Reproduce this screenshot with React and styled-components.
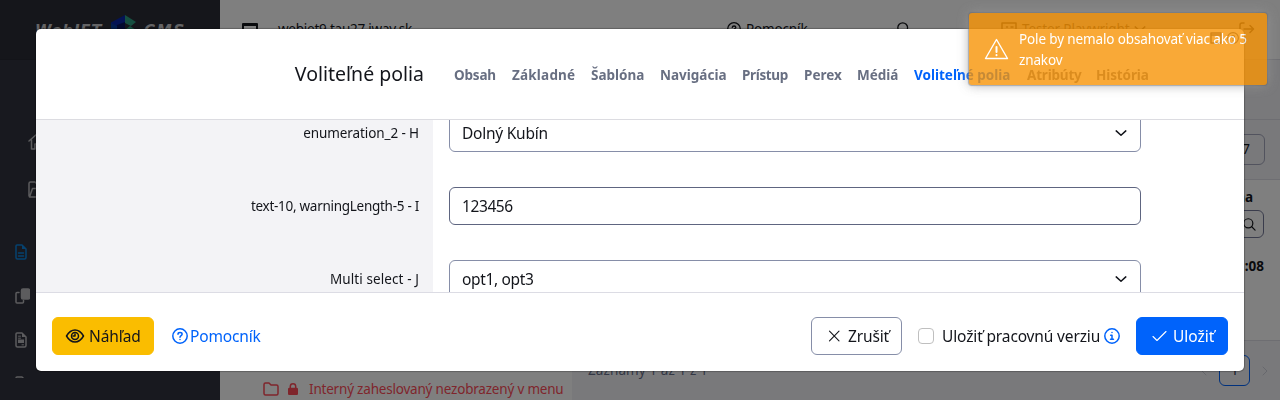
import React from 'react';
import styled, { createGlobalStyle, css } from 'styled-components';

const Global = createGlobalStyle`
  *, *::before, *::after { box-sizing: border-box; }
  body { margin: 0; width: 1280px; height: 400px; overflow: hidden; background: #fff; color: #13151b;
    font: 13.5px/21px "Noto Sans", "Open Sans", sans-serif; font-variant-ligatures: none; }
  button, input { font: inherit; color: inherit; margin: 0; }
`;

const Text = styled.span`
  white-space: nowrap;
  letter-spacing: ${p => p.$ls || 0}px;
`;

const Glyph = styled.svg`
  display: block;
  flex: none;
  width: ${p => p.$w || 16}px;
  height: ${p => p.$h || p.$w || 16}px;
  fill: none;
  stroke: currentColor;
  stroke-width: ${p => p.$stroke || 1.5};
  stroke-linecap: round;
  stroke-linejoin: round;
`;

/* ---------- page behind the dialog ---------- */

const Page = styled.div`
  display: flex;
  height: 400px;
`;

const Sidebar = styled.aside`
  width: 220px;
  flex: none;
  background: #31333e;
  color: #b8b8bc;
`;

const Brand = styled.div`
  height: 60px;
  display: flex;
  align-items: flex-start;
  padding: 14px 0 0 35px;
  background: #2b2d37;
  border-bottom: 1px solid #272932;
`;

const BrandWord = styled.span`
  width: ${p => p.$w}px;
  padding-top: 7px;
  white-space: nowrap;
  color: #c9c9cc;
  font: italic 700 15px/20px "DejaVu Sans", sans-serif;
  letter-spacing: ${p => p.$ls}px;
`;

const MainMenu = styled.div`
  display: grid;
  gap: 32px;
  padding: 73px 0 0 28px;
`;

const SubMenu = styled.div`
  display: grid;
  gap: 28px;
  padding: 47px 0 0 15px;
`;

const MenuIcon = styled.span`
  display: block;
  height: ${p => p.$h || 16}px;
  overflow: ${p => (p.$h ? 'hidden' : 'visible')};
  color: ${p => (p.$active ? '#0a84e0' : 'inherit')};
`;

const Main = styled.main`
  flex: 1;
  display: flex;
  flex-direction: column;
`;

const TopBar = styled.header`
  height: 60px;
  flex: none;
  display: flex;
  align-items: flex-start;
  padding: 17px 24px 0 22px;
  border-bottom: 1px solid #dcdce4;
`;

const TopItem = styled.span`
  width: ${p => p.$w}px;
  flex: none;
  display: flex;
  align-items: center;
  gap: ${p => p.$gap || 4}px;
  height: 24px;
`;

const Columns = styled.div`
  flex: 1;
  display: flex;
`;

const TreePane = styled.section`
  width: 352px;
  flex: none;
  display: flex;
  align-items: flex-end;
`;

const TreeRow = styled.div`
  display: flex;
  align-items: center;
  height: 22px;
  padding-left: 43px;
  color: #ff4b58;
  svg + svg { margin-left: 9px; }
  span { margin-left: 11px; }
`;

const TablePane = styled.section`
  flex: 1;
  display: flex;
  flex-direction: column;
  background: #f3f3f6;
`;

const Strip = styled.div`
  height: ${p => p.$h}px;
  flex: none;
  display: flex;
  flex-direction: column;
  align-items: flex-end;
  padding: ${p => p.$pad || '0'};
  background: ${p => (p.$white ? '#fff' : 'transparent')};
  border-bottom: 1px solid #dcdce4;
  font-weight: ${p => (p.$bold ? 700 : 400)};
`;

const ColumnName = styled(Text)`
  margin-right: 11px;
`;

const TimeValue = styled(Text)`
  margin-top: 18px;
`;

const SmallField = styled.div`
  width: 62px;
  height: ${p => p.$h}px;
  display: flex;
  align-items: center;
  justify-content: flex-end;
  margin-top: ${p => p.$mt || 0}px;
  padding-right: ${p => p.$pr}px;
  border: 1px solid ${p => p.$line};
  border-radius: 6px;
`;

const Pager = styled.div`
  display: flex;
  align-items: center;
  padding: 14px 12px 0 16px;
  color: #68708c;
`;

const PagerNav = styled.div`
  display: flex;
  align-items: center;
  gap: 12px;
  margin-left: auto;
  color: #cfd1da;
`;

const PageNumber = styled.span`
  width: 31px;
  height: 31px;
  display: grid;
  place-items: center;
  border: 1px solid #0063fb;
  border-radius: 6px;
  color: #30364f;
`;

/* ---------- dialog ---------- */

const Backdrop = styled.div`
  position: fixed;
  inset: 0;
  padding: 29px 36px;
  background: rgba(0, 0, 0, .5);
`;

const Dialog = styled.div`
  height: 342px;
  display: flex;
  flex-direction: column;
  overflow: hidden;
  border-radius: 5px;
  background: #fff;
  box-shadow: 0 0 1px 1px rgba(0, 0, 0, .25);
`;

const DialogHead = styled.div`
  height: 91px;
  flex: none;
  display: flex;
  align-items: flex-start;
  border-bottom: 1px solid #dcdce1;
`;

const Title = styled.h1`
  width: 388px;
  margin: 0;
  padding-top: 30px;
  text-align: right;
  font-size: 19.5px;
  line-height: 30px;
  font-weight: 400;
`;

const Tabs = styled.nav`
  display: flex;
  gap: 16px;
  margin: 36px 0 0 30px;
  font-weight: 700;
`;

const Tab = styled.span`
  width: ${p => p.$w}px;
  white-space: nowrap;
  letter-spacing: ${p => p.$ls || 0}px;
  color: ${p => (p.$active ? '#0063fb' : '#686f82')};
`;

const WindowTools = styled.span`
  display: flex;
  gap: 5px;
  margin: 3px 0 0 auto;
  padding-right: 5px;
  color: #4b4f5c;
`;

const DialogBody = styled.div`
  height: 172px;
  flex: none;
  display: flex;
  flex-direction: column;
  justify-content: center;
  overflow: hidden;
  background: linear-gradient(to right, #f3f3f6 397px, #fff 397px);
`;

const FieldRow = styled.div`
  height: 73px;
  flex: none;
  display: grid;
  grid-template-columns: 383px 692px;
  column-gap: 30px;
  align-items: center;
  text-align: right;
`;

const Control = styled.div`
  height: 38px;
  display: flex;
  align-items: center;
  justify-content: space-between;
  padding: 0 13px 0 12px;
  border: 1px solid ${p => (p.$input ? '#5e6580' : '#868ea8')};
  border-radius: 6px;
  background: #fff;
  font-size: 15.5px;
`;

const DialogFoot = styled.div`
  flex: 1;
  display: flex;
  align-items: flex-start;
  padding: 24px 16px 0;
  border-top: 1px solid #dcdce4;
  font-size: 15.5px;
`;

const buttonKinds = {
  preview: css`background: #fabd00; border-color: #fabd00; width: 102px;`,
  link: css`background: transparent; border-color: transparent; color: #0063fb; padding: 0; margin-left: 17px; gap: 2px;`,
  cancel: css`background: #fff; border-color: #868ea8; width: 91px; margin-left: auto;`,
  save: css`background: #0063fb; border-color: #0063fb; color: #fff; width: 92px;`,
};

const Button = styled.button`
  height: 38px;
  display: flex;
  align-items: center;
  gap: 4px;
  padding: 0 12px;
  border: 1px solid;
  border-radius: 6px;
  ${p => buttonKinds[p.$kind]}
`;

const CheckLabel = styled.label`
  width: 218px;
  height: 38px;
  display: flex;
  align-items: center;
  margin-left: 16px;
  padding-right: 16px;
  svg { margin-left: auto; color: #0063fb; }
`;

const Box = styled.span`
  width: 16px;
  height: 16px;
  flex: none;
  margin-right: 8px;
  border: 1px solid #bfbfbf;
  border-radius: 4px;
`;

const Toast = styled.div`
  position: fixed;
  top: 13px;
  left: 969px;
  width: 298px;
  height: 72px;
  display: flex;
  align-items: center;
  gap: 10px;
  padding: 0 15px;
  border-radius: 3px;
  background: #f89406;
  color: #fff;
  opacity: .8;
  box-shadow: 0 0 12px #999, 0 0 1px 1px rgba(70, 80, 100, .6);
`;

const ToastMessage = styled.div`
  padding-top: 2px;
  white-space: nowrap;
  letter-spacing: -.13px;
`;

/* ---------- drawings ---------- */

const HelpIcon = ({ size = 16 }) => (
  <Glyph $w={size} viewBox="0 0 16 16">
    <circle cx="8" cy="8" r="7.2" />
    <path d="M6 6.2C6 5 6.9 4.6 8.1 4.6c1.200 0 2 .7 2 1.600C10.100 7.500 8 7.600 8 9.200M8 11.400v.1" />
  </Glyph>
);

const SearchIcon = ({ size = 14 }) => (
  <Glyph $w={size} $stroke={1.3} viewBox="0 0 14 14"><circle cx="5.700" cy="5.700" r="4.900" /><path d="M9.200 9.200 13 13" /></Glyph>
);

const Chevron = () => (
  <Glyph $w={12} $stroke={1.5} viewBox="0 0 12 12"><path d="M1.200 3.900 6 8.300l4.800-4.400" /></Glyph>
);

const Cube = () => (
  <Glyph $w={26} $h={30} viewBox="0 0 26 30">
    <g stroke="none">
      <path fill="#0826a8" d="M14 1v10L0 17V8.500z" />
      <path fill="#2d9f82" d="m14 1 11 7-5 4-6-3z" />
      <path fill="#07145d" d="m6 11 8-3v12L1 24z" />
      <path fill="#2d9f82" d="m19 12 6 4-5 4-6-4z" />
      <path fill="#063c9f" d="M0 9v10l6 2v-9z" />
    </g>
  </Glyph>
);

const DocIcon = ({ shaded }) => (
  <Glyph $w={12} $h={16} viewBox="0 0 12 16">
    <path d="M2 1h5l4 4v8.500a1.500 1.500 0 0 1-1.500 1.500h-7A1.500 1.500 0 0 1 1 13.500V2a1 1 0 0 1 1-1Z" />
    <path d="M7 1v4h4z" fill="currentColor" stroke="none" />
    {shaded
      ? <><path d="M3.500 4.200h2M3.500 6.200h2M7 12.800h1.500" strokeWidth="1" /><rect x="3" y="7.500" width="6" height="3.500" fill="currentColor" stroke="none" /></>
      : <path d="M3.500 9h5M3.500 12h5" />}
  </Glyph>
);

const tabs = [
  ['Obsah', 42, -0.2], ['Základné', 63, 0.2], ['Šablóna', 53], ['Navigácia', 66], ['Prístup', 46, -0.35],
  ['Perex', 37], ['Médiá', 41], ['Voliteľné polia', 97], ['Atribúty', 53, -0.2], ['História', 53, -0.1],
];

const fields = [
  { label: 'enumeration_2 - H', labelSpacing: -0.1, value: 'Dolný Kubín', spacing: -0.25 },
  { label: 'text-10, warningLength-5 - I', labelSpacing: -0.28, value: '123456', spacing: -0.4, input: true },
  { label: 'Multi select - J', labelSpacing: 0.1, value: 'opt1, opt3', spacing: -0.35 },
];

export default function App() {
  return (
    <>
      <Global />
      <Page>
        <Sidebar>
          <Brand>
            <BrandWord $w={76} $ls={0.8}>WebJET</BrandWord>
            <Cube />
            <BrandWord $w={50} $ls={1.8}>&nbsp;CMS</BrandWord>
          </Brand>
          <MainMenu>
            <MenuIcon>
              <Glyph $w={18} $h={17} viewBox="0 0 18 17"><path d="M1 8 9 1l8 7M3.500 7v9H7v-5h4v5h3.500V7" /></Glyph>
            </MenuIcon>
            <MenuIcon>
              <Glyph $w={18} $h={17} viewBox="0 0 18 17"><path d="M1 15V2.500A1.500 1.500 0 0 1 2.500 1H7l2 2h6v4M1.500 16 4.500 7.500H17L14 16z" /></Glyph>
            </MenuIcon>
          </MainMenu>
          <SubMenu>
            <MenuIcon $active><DocIcon /></MenuIcon>
            <MenuIcon>
              <Glyph $w={15} $h={16} viewBox="0 0 15 16">
                <path d="M4 4.500H2A1 1 0 0 0 1 5.500V14a1 1 0 0 0 1 1h5.500a1 1 0 0 0 1-1v-1.500" />
                <rect x="6.500" y="1" width="8" height="10" rx="1.500" fill="currentColor" />
              </Glyph>
            </MenuIcon>
            <MenuIcon><DocIcon shaded /></MenuIcon>
            <MenuIcon $h={2}><DocIcon /></MenuIcon>
          </SubMenu>
        </Sidebar>
        <Main>
          <TopBar>
            <TopItem $w={485} $gap={20}>
              <Glyph $w={16} $h={14} viewBox="0 0 16 14" $stroke={2}><path d="M1 2h14v11H1zM1 3h14" /></Glyph>
              <Text $ls={-0.24}>webjet9.tau27.iway.sk</Text>
            </TopItem>
            <TopItem $w={170} $gap={5}><HelpIcon size={14} /><Text $ls={-0.15}>Pomocník</Text></TopItem>
            <TopItem $w={104}><SearchIcon /></TopItem>
            <TopItem $w={238} $gap={5}>
              <Glyph $w={16} $h={14} viewBox="0 0 16 14"><path d="M1 1h14v12H1zM4 9h4M10 5h2M10 8h2M5.500 5h1" /></Glyph>
              <Text $ls={-0.12}>Tester Playwright</Text>
              <Chevron />
            </TopItem>
            <TopItem>
              <Glyph $w={16} $h={14} viewBox="0 0 16 14"><path d="M5 1H3Q1 1 1 3v5q0 2 2 2M5 7h9M11 3.500 14.500 7 11 10.500" /></Glyph>
            </TopItem>
          </TopBar>
          <Columns>
            <TreePane>
              <TreeRow>
                <Glyph $w={16} $h={14} viewBox="0 0 16 14"><path d="M1 2.500Q1 1 2.500 1H6l2 2h5.500Q15 3 15 4.500v7q0 1.500-1.500 1.500h-11Q1 13 1 11.500z" /></Glyph>
                <Glyph $w={10} $h={12} viewBox="0 0 10 12"><rect x=".7" y="5.500" width="8.600" height="5.800" rx=".8" fill="currentColor" /><path d="M2.300 5V3.500a2.700 2.700 0 0 1 5.400 0V5" /></Glyph>
                <Text $ls={-0.2}>Interný zaheslovaný nezobrazený v menu</Text>
              </TreeRow>
            </TreePane>
            <TablePane>
              <Strip $h={60} />
              <Strip $h={60} $pad="14px 15px 0 0"><SmallField $h={31} $pr={14} $line="#a4a7bd">7</SmallField></Strip>
              <Strip $h={161} $white $bold $pad="7px 16px 0 0">
                <ColumnName>Zmena</ColumnName>
                <SmallField $h={28} $mt={2} $pr={7} $line="#757998"><SearchIcon size={13} /></SmallField>
                <TimeValue>11:01:08</TimeValue>
              </Strip>
              <Pager>
                <Text $ls={0.1}>Záznamy 1 až 1 z 1</Text>
                <PagerNav>
                  <Glyph $w={6} $h={10} $stroke={1} viewBox="0 0 6 10"><path d="M5 1 1 5l4 4" /></Glyph>
                  <PageNumber>1</PageNumber>
                  <Glyph $w={6} $h={10} $stroke={1} viewBox="0 0 6 10"><path d="m1 1 4 4-4 4" /></Glyph>
                </PagerNav>
              </Pager>
            </TablePane>
          </Columns>
        </Main>
      </Page>

      <Backdrop>
        <Dialog>
          <DialogHead>
            <Title><Text>Voliteľné polia</Text></Title>
            <Tabs>
              {tabs.map(([name, width, spacing]) => (
                <Tab key={name} $w={width} $ls={spacing} $active={name === 'Voliteľné polia'}>{name}</Tab>
              ))}
            </Tabs>
            <WindowTools>
              <Glyph $w={12} viewBox="0 0 12 12"><path d="M1 1h10v10H1zM1 3h10" /></Glyph>
              <HelpIcon size={12} />
            </WindowTools>
          </DialogHead>
          <DialogBody>
            {fields.map(f => (
              <FieldRow key={f.label}>
                <Text $ls={f.labelSpacing}>{f.label}</Text>
                <Control $input={f.input}>
                  <Text $ls={f.spacing}>{f.value}</Text>
                  {!f.input && <Chevron />}
                </Control>
              </FieldRow>
            ))}
          </DialogBody>
          <DialogFoot>
            <Button $kind="preview">
              <Glyph $w={20} $h={14} viewBox="0 0 20 14"><path d="M1.500 7Q5 1 10 1t8.500 6Q15 13 10 13T1.500 7Z" /><circle cx="10" cy="7" r="3.500" /><path d="M10 5v2H8" /></Glyph>
              <Text $ls={-0.1}>Náhľad</Text>
            </Button>
            <Button $kind="link"><HelpIcon /><Text $ls={-0.15}>Pomocník</Text></Button>
            <Button $kind="cancel">
              <Glyph $w={20} $h={12} $stroke={1.1} viewBox="0 0 20 12"><path d="m5.500 1.200 9.500 9.600M15 1.200l-9.500 9.600" /></Glyph>
              <Text $ls={-0.15}>Zrušiť</Text>
            </Button>
            <CheckLabel>
              <Box />
              <Text $ls={-0.14}>Uložiť pracovnú verziu</Text>
              <Glyph viewBox="0 0 16 16"><circle cx="8" cy="8" r="7.200" /><path d="M6.700 7.200H8v4M6.500 11.300h3M8 4.500v.1" /></Glyph>
            </CheckLabel>
            <Button $kind="save">
              <Glyph $w={20} $h={12} $stroke={1.1} viewBox="0 0 20 12"><path d="m4 6.500 4 4L17 1.500" /></Glyph>
              <Text>Uložiť</Text>
            </Button>
          </DialogFoot>
        </Dialog>
      </Backdrop>

      <Toast>
        <Glyph $w={25} $h={22} $stroke={1.4} viewBox="0 0 25 22"><path d="M12.500 1.500 1.500 20.500h22z" /><path strokeWidth="2" d="M12.500 9v5M12.500 17v.2" /></Glyph>
        <ToastMessage>Pole by nemalo obsahovať viac ako 5<br />znakov</ToastMessage>
      </Toast>
    </>
  );
}
